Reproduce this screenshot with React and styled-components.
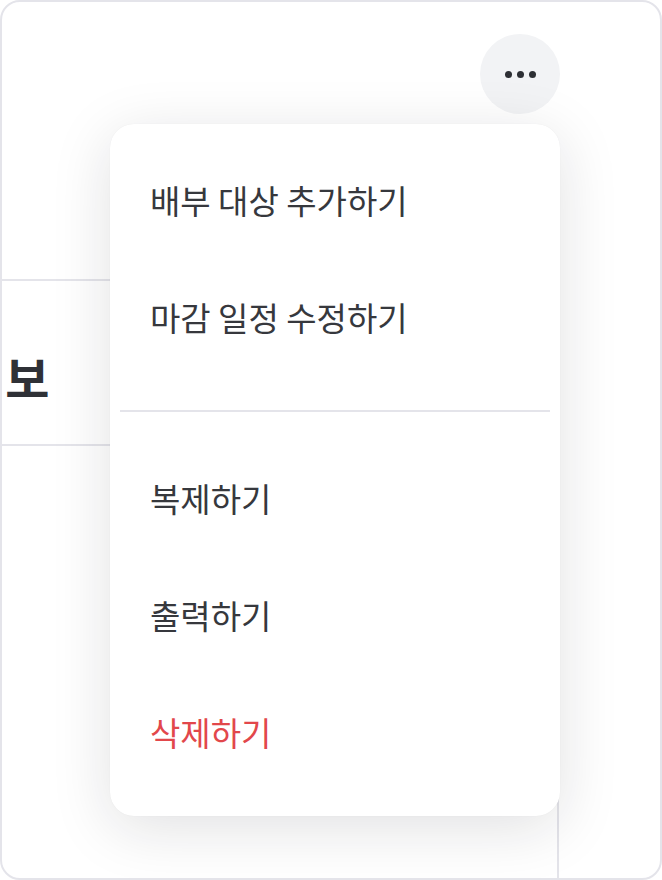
import React from 'react';
import styled, { createGlobalStyle } from 'styled-components';

const GlobalStyle = createGlobalStyle`
  html, body {
    margin: 0;
    padding: 0;
    background: #ffffff;
  }
  body {
    font-family: "Noto Sans CJK KR", "Noto Sans", sans-serif;
  }
`;

const Frame = styled.div`
  position: relative;
  box-sizing: border-box;
  width: 662px;
  height: 880px;
  border: 2px solid #e4e4ea;
  border-radius: 20px;
  overflow: hidden;
  background: #ffffff;
`;

const MainPane = styled.div`
  width: 557px;
  height: 100%;
  display: flex;
  flex-direction: column;
`;

const Header = styled.div`
  height: 277px;
  flex-shrink: 0;
  border-bottom: 2px solid #e4e4ea;
`;

const TitleRow = styled.div`
  height: 165px;
  flex-shrink: 0;
  box-sizing: border-box;
  padding-top: 26px;
  border-bottom: 2px solid #e4e4ea;
  display: flex;
  align-items: center;
  overflow: hidden;
`;

const Title = styled.h2`
  margin: 0 0 0 -41px;
  font-size: 48px;
  font-weight: 700;
  color: #2f3136;
  white-space: nowrap;
`;

const Body = styled.div`
  flex: 1;
  border-right: 2px solid #e4e4ea;
`;

const MoreButton = styled.button`
  position: absolute;
  top: 32px;
  left: 478px;
  width: 80px;
  height: 80px;
  border: none;
  border-radius: 50%;
  background: #f2f3f5;
  display: flex;
  align-items: center;
  justify-content: center;
  gap: 5px;
  padding: 0;
  cursor: pointer;
`;

const Dot = styled.span`
  width: 7px;
  height: 7px;
  border-radius: 50%;
  background: #2d2f34;
`;

const Menu = styled.ul`
  position: absolute;
  top: 122px;
  left: 108px;
  width: 450px;
  box-sizing: border-box;
  margin: 0;
  padding: 17px 10px 26px;
  list-style: none;
  background: #ffffff;
  border-radius: 24px;
  box-shadow: 0 12px 60px rgba(20, 22, 30, 0.13), 0 0 1px rgba(20, 22, 30, 0.08);
`;

const MenuItem = styled.li`
  height: 117px;
  display: flex;
  align-items: center;
  padding-left: 30px;
  font-size: 33px;
  font-weight: 400;
  color: ${(p) => (p.danger ? '#e2474b' : '#36383d')};
  cursor: pointer;
`;

const Divider = styled.li`
  height: 2px;
  margin: 35px 0 27px;
  background: #e4e4ea;
`;

export default function App() {
  return (
    <>
      <GlobalStyle />
      <Frame>
        <MainPane>
          <Header />
          <TitleRow>
            <Title>정보</Title>
          </TitleRow>
          <Body />
        </MainPane>
        <MoreButton type="button" aria-label="더보기">
          <Dot />
          <Dot />
          <Dot />
        </MoreButton>
        <Menu>
          <MenuItem>배부 대상 추가하기</MenuItem>
          <MenuItem>마감 일정 수정하기</MenuItem>
          <Divider />
          <MenuItem>복제하기</MenuItem>
          <MenuItem>출력하기</MenuItem>
          <MenuItem danger>삭제하기</MenuItem>
        </Menu>
      </Frame>
    </>
  );
}
